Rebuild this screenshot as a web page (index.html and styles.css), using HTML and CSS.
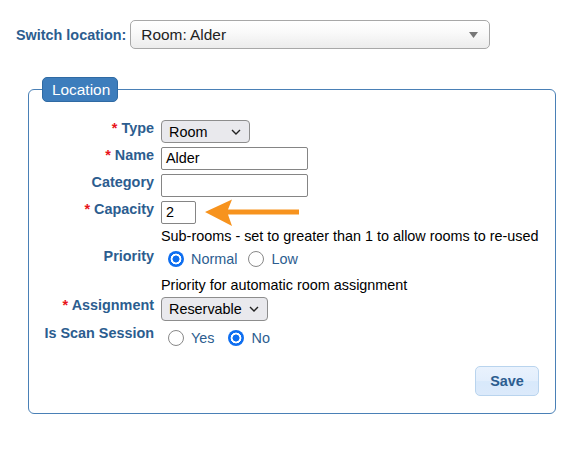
FILE: index.html
```html
<!DOCTYPE html>
<html>
<head>
<meta charset="utf-8">
<link rel="stylesheet" href="styles.css">
</head>
<body>
<div class="page">
  <div class="switch-row">
    <label class="switch-label">Switch location:</label>
    <div class="switch-select">
      <span class="switch-value">Room: Alder</span>
      <svg class="switch-caret" width="9" height="6" viewBox="0 0 9 6"><path d="M0 0 H9 L4.5 6 Z" fill="#777"/></svg>
    </div>
  </div>

  <fieldset class="loc">
    <legend class="loc-legend">Location</legend>
    <div class="form">
      <div class="row">
        <div class="lbl"><span class="req">*</span> Type</div>
        <div class="ctl">
          <div class="sel sel-type"><span>Room</span><svg class="chev" width="10" height="6" viewBox="0 0 10 6"><path d="M1 1 L5 5 L9 1" fill="none" stroke="#222" stroke-width="1.4"/></svg></div>
        </div>
      </div>
      <div class="row">
        <div class="lbl"><span class="req">*</span> Name</div>
        <div class="ctl"><div class="inp inp-wide">Alder</div></div>
      </div>
      <div class="row">
        <div class="lbl">Category</div>
        <div class="ctl"><div class="inp inp-wide"></div></div>
      </div>
      <div class="row">
        <div class="lbl"><span class="req">*</span> Capacity</div>
        <div class="ctl">
          <div class="cap-line">
            <div class="inp inp-cap">2</div>
            <svg class="arrow" width="96" height="28" viewBox="0 0 96 28"><path d="M0 13 L27 0.5 L23 10.5 L94 10.5 L94 15.5 L23 15.5 L27 27 Z" fill="#f7931e"/></svg>
          </div>
          <div class="help">Sub-rooms - set to greater than 1 to allow rooms to re-used</div>
        </div>
      </div>
      <div class="row">
        <div class="lbl">Priority</div>
        <div class="ctl">
          <div class="radios pri">
            <span class="radio on"></span><span class="rtext">Normal</span>
            <span class="radio r-low"></span><span class="rtext">Low</span>
          </div>
          <div class="help help2">Priority for automatic room assignment</div>
        </div>
      </div>
      <div class="row">
        <div class="lbl"><span class="req">*</span> Assignment</div>
        <div class="ctl">
          <div class="sel sel-assign"><span>Reservable</span><svg class="chev" width="10" height="6" viewBox="0 0 10 6"><path d="M1 1 L5 5 L9 1" fill="none" stroke="#222" stroke-width="1.4"/></svg></div>
        </div>
      </div>
      <div class="row">
        <div class="lbl">Is Scan Session</div>
        <div class="ctl">
          <div class="radios scan">
            <span class="radio"></span><span class="rtext">Yes</span>
            <span class="radio on r-no"></span><span class="rtext">No</span>
          </div>
        </div>
      </div>
      <div class="actions">
        <button class="save">Save</button>
      </div>
    </div>
  </fieldset>
</div>
</body>
</html>
```

FILE: styles.css
```css
html, body {
  margin: 0;
  padding: 0;
  background: #fff;
}
body {
  font-family: "Liberation Sans", Arial, sans-serif;
  font-size: 14.4px;
  color: #000;
}
.page {
  padding: 20px 0 0 16px;
}
.switch-row {
  display: flex;
  align-items: center;
  gap: 4px;
}
.switch-label {
  font-weight: bold;
  font-size: 14.4px;
  color: #2c5d8f;
}
.switch-select {
  box-sizing: border-box;
  width: 360px;
  height: 29px;
  border: 1px solid #a8a8a8;
  border-radius: 5px;
  background: linear-gradient(#ffffff, #fafafa 40%, #ececec);
  display: flex;
  align-items: center;
  justify-content: space-between;
  padding: 0 11px 0 10px;
}
.switch-value {
  font-size: 15.4px;
  color: #222;
}
.loc {
  box-sizing: border-box;
  margin: 28px 0 0 12px;
  width: 528px;
  border: 1px solid #4a80b6;
  border-radius: 6px;
  padding: 0 16px 17px 0;
  min-width: 0;
}
.loc-legend {
  box-sizing: border-box;
  margin-left: 13px;
  height: 25px;
  width: 76px;
  padding: 0 0 0 9px;
  background: #3d7dbc;
  border: 1px solid #2f6aa3;
  border-radius: 5px;
  color: #fff;
  font-size: 15.4px;
  line-height: 23px;
}
.form {
  padding-top: 18px;
}
.row {
  display: grid;
  grid-template-columns: 125px 1fr;
  column-gap: 7px;
  align-items: start;
  margin-bottom: 4px;
}
.lbl {
  text-align: right;
  font-weight: bold;
  color: #2c5d8f;
  line-height: 16px;
  white-space: nowrap;
}
.req {
  color: #e8141b;
}
.ctl {
  display: flex;
  flex-direction: column;
  align-items: flex-start;
}
.sel {
  box-sizing: border-box;
  display: flex;
  align-items: center;
  justify-content: space-between;
  background: #e9e9ed;
  border: 1px solid #8d8d8d;
  border-radius: 4px;
  padding: 0 8px 0 7px;
}
.sel-type {
  width: 89px;
  height: 23px;
}
.sel-assign {
  width: 107px;
  height: 24px;
}
.inp {
  box-sizing: border-box;
  height: 23px;
  border: 1px solid #858585;
  border-radius: 2px;
  padding: 0 4px;
  line-height: 21px;
  background: #fff;
}
.inp-wide {
  width: 147px;
}
.inp-cap {
  width: 35px;
}
.cap-line {
  display: flex;
  align-items: flex-start;
  height: 23px;
}
.arrow {
  flex: none;
  margin-left: 9px;
  margin-top: -2px;
}
.help {
  margin-top: 4px;
  line-height: 16px;
}
.help2 {
  margin-top: 7px;
}
.radios {
  display: flex;
  align-items: center;
  height: 22px;
}
.radios.scan {
  height: 26px;
}
.radio {
  box-sizing: border-box;
  width: 16px;
  height: 16px;
  border-radius: 50%;
  border: 1px solid #888;
  background: #fff;
  margin-left: 7px;
}
.radio.on {
  border: none;
  background: radial-gradient(circle, #0e6ef0 0 3.2px, #fff 3.8px 5.1px, #0e6ef0 5.7px);
}
.rtext {
  color: #2c5d8f;
  margin-left: 7px;
}
.r-low {
  margin-left: 11px;
}
.scan .radio:first-child {
  margin-left: 7px;
}
.r-no {
  margin-left: 14px;
}
.actions {
  display: flex;
  justify-content: flex-end;
  margin-top: 15px;
}
.save {
  box-sizing: border-box;
  width: 64px;
  height: 30px;
  border: 1px solid #b9d4ee;
  border-radius: 5px;
  background: linear-gradient(#e9f2fd, #e2eefc 50%, #d8e9fb 52%, #dceafb);
  color: #2c5d8f;
  font-family: "Liberation Sans", Arial, sans-serif;
  font-weight: bold;
  font-size: 14.4px;
  padding: 0;
}
```
